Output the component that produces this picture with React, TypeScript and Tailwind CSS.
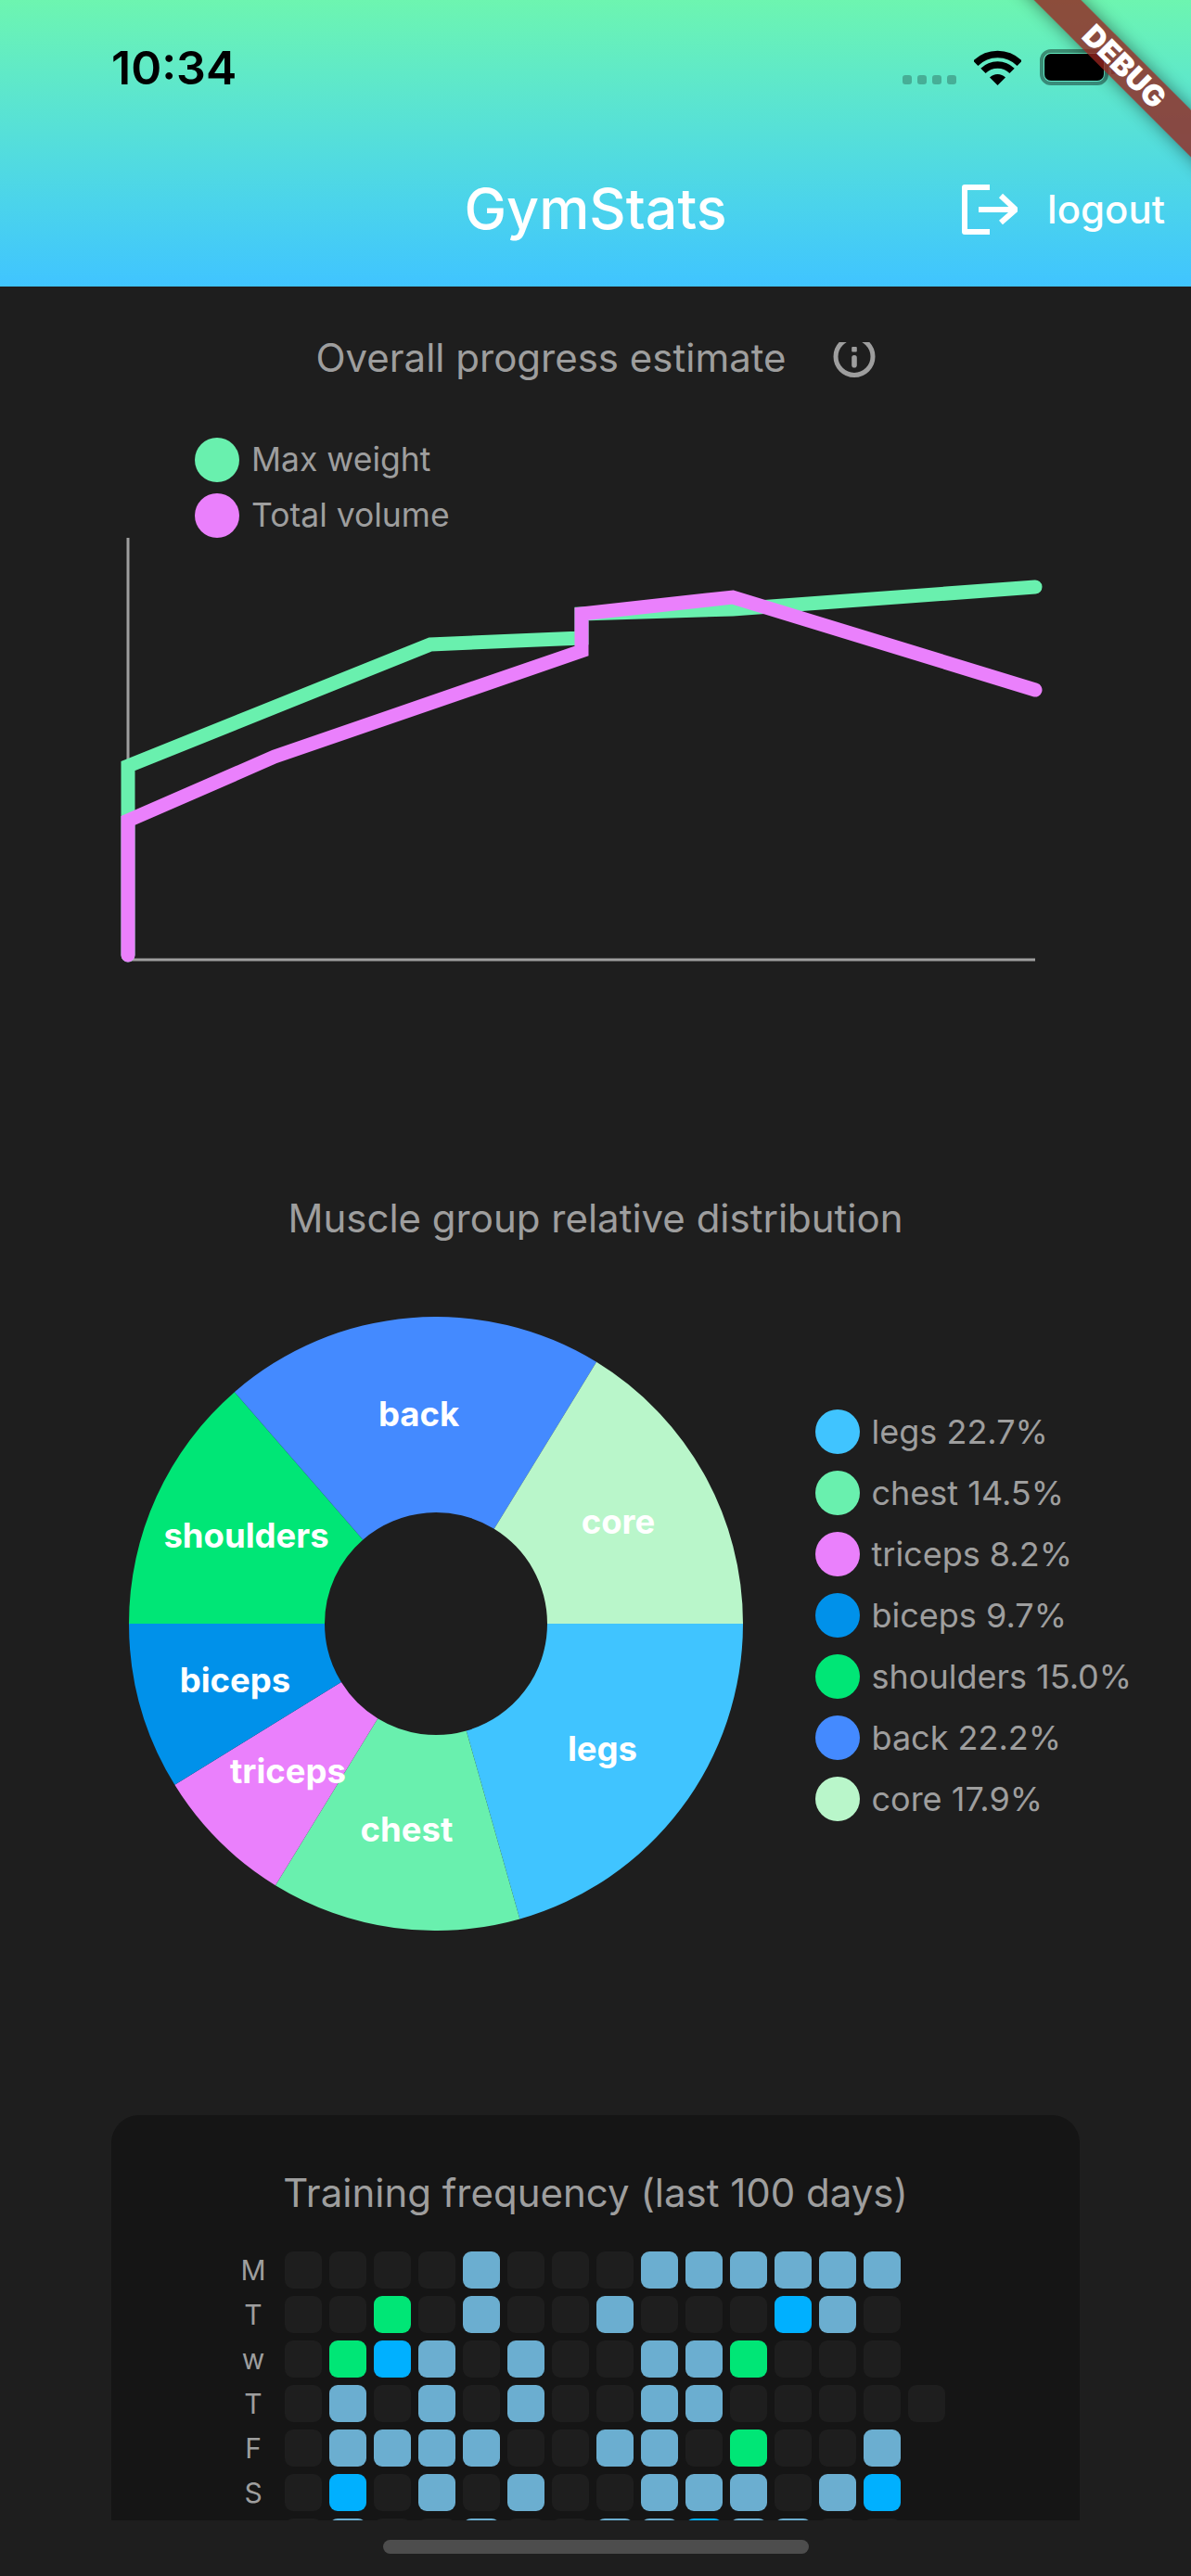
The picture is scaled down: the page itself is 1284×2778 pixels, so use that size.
import React from 'react';

const legendItems = [
  { name: 'legs', value: 22.7, dot: 'bg-[#40c4ff]', fill: '#40c4ff', x: 649, y: 1887 },
  { name: 'chest', value: 14.5, dot: 'bg-[#69f0ae]', fill: '#69f0ae', x: 438, y: 1974 },
  { name: 'triceps', value: 8.2, dot: 'bg-[#ea80fc]', fill: '#ea80fc', x: 310, y: 1911 },
  { name: 'biceps', value: 9.7, dot: 'bg-[#0091ea]', fill: '#0091ea', x: 253, y: 1813 },
  { name: 'shoulders', value: 15.0, dot: 'bg-[#00e676]', fill: '#00e676', x: 265, y: 1657 },
  { name: 'back', value: 22.2, dot: 'bg-[#448aff]', fill: '#448aff', x: 451, y: 1526 },
  { name: 'core', value: 17.9, dot: 'bg-[#b9f6ca]', fill: '#b9f6ca', x: 666, y: 1642 },
];

const PIE_SIZE = 662;
const PIE_TOP = 1420;
const PIE_LEFT = 138.5;

function slicePath(start: number, end: number) {
  const c = PIE_SIZE / 2;
  const r1 = 331;
  const r0 = 120;
  const pt = (r: number, a: number) => `${c + r * Math.cos(a)} ${c + r * Math.sin(a)}`;
  const large = end - start > Math.PI ? 1 : 0;
  return `M${pt(r0, start)} L${pt(r1, start)} A${r1} ${r1} 0 ${large} 1 ${pt(r1, end)} L${pt(r0, end)} A${r0} ${r0} 0 ${large} 0 ${pt(r0, start)} Z`;
}

function DonutChart() {
  const total = legendItems.reduce((sum, item) => sum + item.value, 0);
  let angle = 0;
  return (
    <svg width={PIE_SIZE} height={PIE_SIZE} viewBox={`0 0 ${PIE_SIZE} ${PIE_SIZE}`} className="shrink-0">
      {legendItems.map((item) => {
        const start = angle;
        angle += (item.value / total) * Math.PI * 2;
        return <path key={item.name} d={slicePath(start, angle)} fill={item.fill} />;
      })}
      {legendItems.map((item) => (
        <text
          key={item.name}
          x={item.x - PIE_LEFT}
          y={item.y - PIE_TOP + 12}
          textAnchor="middle"
          fill="#ffffff"
          fontSize="36.5"
          fontWeight="700"
        >
          {item.name}
        </text>
      ))}
    </svg>
  );
}

function ProgressChart() {
  return (
    <svg width="1000" height="470" viewBox="0 0 1000 470" className="ml-[130px] block" fill="none">
      <path d="M8 0 V455 H986" stroke="#9e9e9e" strokeWidth="3" />
      <polyline
        points="8,450 8,246 334,115 497,108 497,82 660,77 986,53"
        stroke="#69f0ae"
        strokeWidth="15"
        strokeLinecap="round"
        strokeLinejoin="miter"
      />
      <polyline
        points="8,450 8,305 166,236 497,122 497,82 660,64 986,164"
        stroke="#ea80fc"
        strokeWidth="15"
        strokeLinecap="round"
        strokeLinejoin="miter"
      />
    </svg>
  );
}

const cellColors: Record<string, string> = {
  '.': 'bg-[#1e1e1e]',
  l: 'bg-[#6baed0]',
  b: 'bg-[#00b0ff]',
  g: 'bg-[#00e676]',
};

const frequencyRows = [
  { day: 'M', cells: '....l...llllll' },
  { day: 'T', cells: '..g.l..l...bl.' },
  { day: 'w', cells: '.gbl.l..llg...' },
  { day: 'T', cells: '.l.l.l..ll.....' },
  { day: 'F', cells: '.llll..ll.g..l' },
  { day: 'S', cells: '.b.l.l..lll.lb' },
  { day: 'S', cells: '.l..l..llbll..' },
];

function WifiIcon() {
  return (
    <svg width="51" height="38" viewBox="0 0 51 38" fill="none" className="shrink-0">
      <path d="M1.8 14.3 A33.5 33.5 0 0 1 49.2 14.3" stroke="#000" strokeWidth="7.5" />
      <path d="M9.94 22.44 A22 22 0 0 1 41.06 22.44" stroke="#000" strokeWidth="7.5" />
      <path d="M25.5 38 L17 29.5 A12 12 0 0 1 34 29.5 Z" fill="#000" />
    </svg>
  );
}

function LogoutIcon() {
  return (
    <svg width="60" height="54" viewBox="0 0 60 54" fill="none" stroke="#fff" strokeWidth="6" className="shrink-0">
      <path d="M30 3 H3 V51 H30" strokeLinejoin="round" />
      <path d="M18 27 H56" />
      <path d="M42 12 L58 27 L42 41" />
    </svg>
  );
}

// the top of the circle is cut off in the app, so the box is shorter than the ring
function InfoIcon() {
  return (
    <svg width="46" height="38" viewBox="0 0 46 38" fill="none" className="mt-[5px] shrink-0">
      <circle cx="23" cy="15.5" r="20" stroke="#9e9e9e" strokeWidth="5" />
      <rect x="20.2" y="5" width="5.6" height="5.4" rx="1" fill="#9e9e9e" />
      <rect x="20.2" y="14" width="5.6" height="13.5" rx="2.8" fill="#9e9e9e" />
    </svg>
  );
}

export default function App() {
  return (
    <div className="relative flex h-[2778px] w-[1284px] flex-col overflow-hidden bg-[#1e1e1e] font-['Inter',sans-serif]">
      {/* Header */}
      <div className="h-[309px] shrink-0 bg-gradient-to-b from-[#6df5b0] to-[#40c4ff] pt-[53px]">
        <div className="flex h-[39px] items-center pl-[120px] pr-[81px]">
          <span className="text-[50px] leading-none font-semibold text-black">10:34</span>
          <div className="ml-auto flex items-center">
            <div className="mb-[1px] flex gap-[6px] self-end">
              <div className="h-[10px] w-[10px] rounded-[3px] bg-black/25" />
              <div className="h-[10px] w-[10px] rounded-[3px] bg-black/25" />
              <div className="h-[10px] w-[10px] rounded-[3px] bg-black/25" />
              <div className="h-[10px] w-[10px] rounded-[3px] bg-black/25" />
            </div>
            <div className="ml-[19px]">
              <WifiIcon />
            </div>
            <div className="ml-[20px] h-[39px] w-[74px] rounded-[12px] border-[4px] border-black/40 p-[1px]">
              <div className="h-full w-full rounded-[7px] bg-black" />
            </div>
            <div className="ml-[3px] h-[15px] w-[5px] rounded-r-[3px] bg-black/40" />
          </div>
        </div>
        <div className="mt-[103px] grid grid-cols-[1fr_auto_1fr] items-center px-[28px] text-white">
          <div />
          <h1 className="text-[61px] leading-none font-medium">GymStats</h1>
          <div className="flex items-center justify-end gap-[32px]">
            <LogoutIcon />
            <span className="text-[42px] leading-none font-medium">logout</span>
          </div>
        </div>
      </div>

      {/* Scroll content */}
      <div className="min-h-0 flex-1 overflow-hidden">
        <div className="flex h-[163px] items-start justify-center gap-[50px] pt-[55px] text-[#9e9e9e]">
          <span className="text-[42px] leading-[44px]">Overall progress estimate</span>
          <InfoIcon />
        </div>

        <div className="flex flex-col gap-[12px] pl-[210px]">
          <div className="flex h-[48px] items-center gap-[13px]">
            <div className="h-[48px] w-[48px] rounded-full bg-[#69f0ae]" />
            <span className="text-[35.5px] text-[#9e9e9e]">Max weight</span>
          </div>
          <div className="flex h-[48px] items-center gap-[13px]">
            <div className="h-[48px] w-[48px] rounded-full bg-[#ea80fc]" />
            <span className="text-[35.5px] text-[#9e9e9e]">Total volume</span>
          </div>
        </div>

        <ProgressChart />

        <h2 className="mt-[242px] text-center text-[42px] leading-[44px] text-[#9e9e9e]">
          Muscle group relative distribution
        </h2>

        <div className="mt-[84px] flex items-start pl-[138.5px]">
          <DonutChart />
          <div className="mt-[100px] ml-[78px] flex flex-col gap-[18px]">
            {legendItems.map((item) => (
              <div key={item.name} className="flex h-[48px] items-center gap-[13px]">
                <div className={`h-[48px] w-[48px] rounded-full ${item.dot}`} />
                <span className="text-[36px] whitespace-nowrap text-[#9e9e9e]">
                  {item.name} {item.value.toFixed(1)}%
                </span>
              </div>
            ))}
          </div>
        </div>

        {/* Training frequency card */}
        <div className="mx-[120px] mt-[199px] h-[800px] rounded-[30px] bg-[#151515] pt-[62px]">
          <h3 className="text-center text-[42px] leading-[44px] text-[#9e9e9e]">
            Training frequency (last 100 days)
          </h3>
          <div className="mt-[41px] flex flex-col gap-[8px] pl-[130px]">
            {frequencyRows.map((row, i) => (
              <div key={i} className="flex items-center gap-[8px]">
                <span className="w-[49px] pr-[3px] text-center text-[30px] leading-none text-[#9e9e9e]">{row.day}</span>
                {row.cells.split('').map((cell, j) => (
                  <div key={j} className={`h-[40px] w-[40px] rounded-[9px] ${cellColors[cell]}`} />
                ))}
              </div>
            ))}
          </div>
        </div>
      </div>

      {/* Home indicator */}
      <div className="flex h-[60px] shrink-0 justify-center bg-[#1e1e1e] pt-[21px]">
        <div className="h-[15px] w-[459px] rounded-full bg-[#4d4d4d]" />
      </div>

      {/* Debug ribbon */}
      <div className="absolute top-[54px] left-[1012px] flex h-[36px] w-[400px] rotate-45 items-center justify-center bg-[#94231ecc] shadow-[0_0_18px_rgba(0,0,0,0.45)]">
        <span className="text-[32px] leading-none font-black text-white">DEBUG</span>
      </div>
    </div>
  );
}
